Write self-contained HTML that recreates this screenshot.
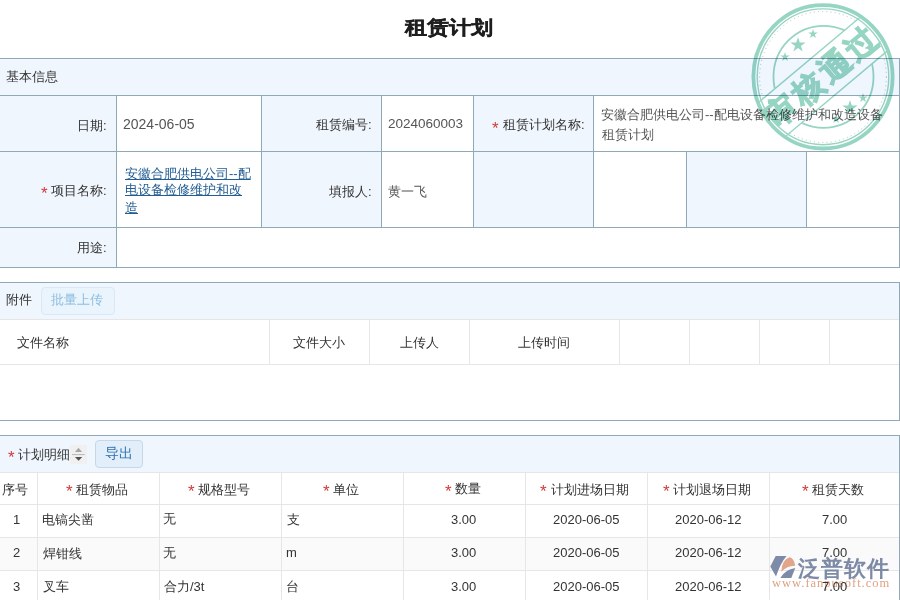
<!DOCTYPE html>
<html><head><meta charset="utf-8">
<style>
*{box-sizing:border-box;margin:0;padding:0}
html,body{width:900px;height:600px;overflow:hidden;background:#fff}
body{position:relative;font-family:"Liberation Sans",sans-serif;font-size:13px;color:#333}
.a{position:absolute}
.t{position:absolute;white-space:nowrap;line-height:16px}
.hl{position:absolute;height:1px;background:#8ea9b8}
.vl{position:absolute;width:1px;background:#8ea9b8}
.ghl{position:absolute;height:1px;background:#e6e6e6}
.gvl{position:absolute;width:1px;background:#e6e6e6}
.bg{position:absolute;background:#f0f6fd}
</style></head><body>
<!-- basic info section -->
<div class="bg" style="left:0;top:58px;width:899px;height:37px;background:#eff6fe"></div>
<div class="bg" style="left:0;top:96px;width:116px;height:171px"></div>
<div class="bg" style="left:262px;top:96px;width:120px;height:131px"></div>
<div class="bg" style="left:474px;top:96px;width:119px;height:131px"></div>
<div class="bg" style="left:687px;top:152px;width:119px;height:75px"></div>
<div class="hl" style="left:0;top:58px;width:900px"></div>
<div class="hl" style="left:0;top:95px;width:900px"></div>
<div class="hl" style="left:0;top:151px;width:900px"></div>
<div class="hl" style="left:0;top:227px;width:900px"></div>
<div class="hl" style="left:0;top:267px;width:900px"></div>
<div class="vl" style="left:899px;top:58px;height:210px"></div>
<div class="vl" style="left:116px;top:95px;height:172px"></div>
<div class="vl" style="left:261px;top:95px;height:132px"></div>
<div class="vl" style="left:381px;top:95px;height:132px"></div>
<div class="vl" style="left:473px;top:95px;height:132px"></div>
<div class="vl" style="left:593px;top:95px;height:132px"></div>
<div class="vl" style="left:686px;top:151px;height:76px"></div>
<div class="vl" style="left:806px;top:151px;height:76px"></div>
<!-- attachment section -->
<div class="bg" style="left:0;top:282px;width:899px;height:37px;background:#eff6fe"></div>
<div class="hl" style="left:0;top:282px;width:900px"></div>
<div class="vl" style="left:899px;top:282px;height:139px"></div>
<div class="hl" style="left:0;top:420px;width:900px"></div>
<div class="ghl" style="left:0;top:319px;width:899px"></div>
<div class="ghl" style="left:0;top:364px;width:899px"></div>
<div class="gvl" style="left:269px;top:319px;height:45px"></div>
<div class="gvl" style="left:369px;top:319px;height:45px"></div>
<div class="gvl" style="left:469px;top:319px;height:45px"></div>
<div class="gvl" style="left:619px;top:319px;height:45px"></div>
<div class="gvl" style="left:689px;top:319px;height:45px"></div>
<div class="gvl" style="left:759px;top:319px;height:45px"></div>
<div class="gvl" style="left:829px;top:319px;height:45px"></div>
<div class="a" style="left:41px;top:287px;width:74px;height:28px;border:1px solid #d9e8f4;background:#e9f4fc;border-radius:4px"></div>
<!-- detail section -->
<div class="bg" style="left:0;top:435px;width:899px;height:37px;background:#eff6fe"></div>
<div class="hl" style="left:0;top:435px;width:900px"></div>
<div class="vl" style="left:899px;top:435px;height:165px"></div>
<div class="ghl" style="left:0;top:472px;width:899px"></div>
<div class="ghl" style="left:0;top:504px;width:899px"></div>
<div class="ghl" style="left:0;top:537px;width:899px"></div>
<div class="ghl" style="left:0;top:570px;width:899px"></div>
<div class="a" style="left:0;top:538px;width:899px;height:32px;background:#fafafa"></div>
<div class="gvl" style="left:37px;top:472px;height:128px"></div>
<div class="gvl" style="left:159px;top:472px;height:128px"></div>
<div class="gvl" style="left:281px;top:472px;height:128px"></div>
<div class="gvl" style="left:403px;top:472px;height:128px"></div>
<div class="gvl" style="left:525px;top:472px;height:128px"></div>
<div class="gvl" style="left:647px;top:472px;height:128px"></div>
<div class="gvl" style="left:769px;top:472px;height:128px"></div>
<div class="a" style="left:70px;top:445px;width:17px;height:19px;background:#f0f0f0"></div>
<svg class="a" style="left:70px;top:445px" width="17" height="19" viewBox="0 0 17 19">
<path d="M5,7 L8.5,2.8 L12,7 Z" fill="#a6a6a6"/><rect x="2" y="9" width="12.75" height="1.1" fill="#bdbdbd"/><path d="M5,12 L12.2,12 L8.6,15.8 Z" fill="#505050"/></svg>
<div class="a" style="left:95px;top:440px;width:48px;height:28px;border:1px solid #c6d8e8;background:#e2effb;border-radius:4px"></div>
<svg class="a" style="left:0;top:0" width="900" height="600" viewBox="0 0 900 600">
<path d="M775.7,556 L786.5,556 Q780.5,563 776,576.5 L770.3,566.5 Z" fill="#7e8ba8"/>
<path d="M781.3,571.7 Q781.5,560 789.5,557.2 Q794,558 795.3,565.7 Q787,565.5 781.3,571.7 Z" fill="#e0a58a"/>
<path d="M780.3,578 Q785,569.5 795.3,568 L791.3,578 Z" fill="#7e8ba8"/>
<text x="797.5" y="575.5" font-size="22" font-weight="bold" fill="#7d8aa5" font-family="Liberation Sans, sans-serif" letter-spacing="1">泛普软件</text>
<text x="772" y="587.3" font-size="12.5" fill="#e0a285" font-family="Liberation Serif, serif" letter-spacing="1">www.fanpusoft.com</text>
</svg>

<div class="t" id="title" style="left:405.00px;top:21.00px;font-size:22px;font-weight:bold;color:#1e1e1e;-webkit-text-stroke:0.45px #1e1e1e;transform:scaleY(0.86);transform-origin:0 0">租赁计划</div>
<div class="t" id="jbxx" style="left:6.00px;top:69.00px;">基本信息</div>
<div class="t" id="riqi" style="left:77.00px;top:118.00px;">日期:</div>
<div class="t" id="date" style="left:123.00px;top:116.00px;font-size:14px;color:#555">2024-06-05</div>
<div class="t" id="zlbh" style="left:316.00px;top:117.00px;">租赁编号:</div>
<div class="t" id="num" style="left:388.00px;top:116.00px;font-size:13.5px;color:#555">2024060003</div>
<div class="t" id="s1" style="left:492.00px;top:121.00px;color:#d03a3a;font-size:17px">*</div>
<div class="t" id="zljhmc" style="left:503.00px;top:117.00px;">租赁计划名称:</div>
<div class="t" id="long1" style="left:601.00px;top:107.00px;color:#555">安徽合肥供电公司--配电设备检修维护和改造设备</div>
<div class="t" id="long2" style="left:602.00px;top:127.00px;color:#555">租赁计划</div>
<div class="t" id="s2" style="left:41.00px;top:186.20px;color:#d03a3a;font-size:17px">*</div>
<div class="t" id="xmmc" style="left:51.00px;top:183.00px;">项目名称:</div>
<div class="t" id="link1" style="left:125.00px;top:165.50px;color:#235d92;text-decoration:underline">安徽合肥供电公司--配</div>
<div class="t" id="link2" style="left:125.00px;top:182.20px;color:#235d92;text-decoration:underline">电设备检修维护和改</div>
<div class="t" id="link3" style="left:125.00px;top:199.70px;color:#235d92;text-decoration:underline">造</div>
<div class="t" id="yongtu" style="left:77.00px;top:240.00px;">用途:</div>
<div class="t" id="tbr" style="left:329.00px;top:184.00px;">填报人:</div>
<div class="t" id="hyf" style="left:388.00px;top:184.00px;color:#555">黄一飞</div>
<div class="t" id="fujian" style="left:6.00px;top:292.00px;">附件</div>
<div class="t" id="plsc" style="left:50.80px;top:292.00px;color:#8ebde0">批量上传</div>
<div class="t" id="wjmc" style="left:17.00px;top:335.00px;">文件名称</div>
<div class="t" id="wjdx" style="left:293.00px;top:335.00px;">文件大小</div>
<div class="t" id="scr" style="left:400.00px;top:335.00px;">上传人</div>
<div class="t" id="scsj" style="left:518.00px;top:335.00px;">上传时间</div>
<div class="t" id="s3" style="left:8.00px;top:450.20px;color:#d03a3a;font-size:17px">*</div>
<div class="t" id="jhmx" style="left:18.00px;top:447.00px;">计划明细</div>
<div class="t" id="daochu" style="left:105.00px;top:446.40px;color:#2c70ad;font-size:13.5px">导出</div>
<div class="t" id="xuhao" style="left:2.00px;top:482.00px;">序号</div>
<div class="t" id="s4" style="left:66.00px;top:483.80px;color:#d03a3a;font-size:17px">*</div>
<div class="t" id="zlwp" style="left:76.00px;top:482.00px;">租赁物品</div>
<div class="t" id="s5" style="left:188.00px;top:483.80px;color:#d03a3a;font-size:17px">*</div>
<div class="t" id="ggxh" style="left:198.00px;top:482.00px;">规格型号</div>
<div class="t" id="s6" style="left:323.00px;top:483.80px;color:#d03a3a;font-size:17px">*</div>
<div class="t" id="danwei" style="left:333.00px;top:482.00px;">单位</div>
<div class="t" id="s7" style="left:445.00px;top:483.80px;color:#d03a3a;font-size:17px">*</div>
<div class="t" id="shuliang" style="left:455.00px;top:481.00px;">数量</div>
<div class="t" id="s8" style="left:540.00px;top:483.80px;color:#d03a3a;font-size:17px">*</div>
<div class="t" id="jcrq" style="left:551.00px;top:482.00px;">计划进场日期</div>
<div class="t" id="s9" style="left:663.00px;top:483.80px;color:#d03a3a;font-size:17px">*</div>
<div class="t" id="tcrq" style="left:673.00px;top:482.00px;">计划退场日期</div>
<div class="t" id="s10" style="left:802.00px;top:483.80px;color:#d03a3a;font-size:17px">*</div>
<div class="t" id="zlts" style="left:812.00px;top:482.00px;">租赁天数</div>
<div class="t" id="r0c0" style="left:13.00px;top:512.00px;">1</div>
<div class="t" id="r0c1" style="left:42.00px;top:512.00px;">电镐尖凿</div>
<div class="t" id="r0c2" style="left:163.00px;top:511.00px;">无</div>
<div class="t" id="r0c3" style="left:287.00px;top:512.00px;">支</div>
<div class="t" id="r0c4" style="left:451.00px;top:512.00px;">3.00</div>
<div class="t" id="r0c5" style="left:553.00px;top:512.00px;">2020-06-05</div>
<div class="t" id="r0c6" style="left:675.00px;top:512.00px;">2020-06-12</div>
<div class="t" id="r0c7" style="left:822.00px;top:512.00px;">7.00</div>
<div class="t" id="r1c0" style="left:13.00px;top:545.00px;">2</div>
<div class="t" id="r1c1" style="left:43.00px;top:546.00px;">焊钳线</div>
<div class="t" id="r1c2" style="left:163.00px;top:545.00px;">无</div>
<div class="t" id="r1c3" style="left:286.00px;top:545.00px;">m</div>
<div class="t" id="r1c4" style="left:451.00px;top:545.00px;">3.00</div>
<div class="t" id="r1c5" style="left:553.00px;top:545.00px;">2020-06-05</div>
<div class="t" id="r1c6" style="left:675.00px;top:545.00px;">2020-06-12</div>
<div class="t" id="r1c7" style="left:822.00px;top:545.00px;">7.00</div>
<div class="t" id="r2c0" style="left:13.00px;top:579.00px;">3</div>
<div class="t" id="r2c1" style="left:43.00px;top:579.00px;">叉车</div>
<div class="t" id="r2c2" style="left:164.00px;top:579.00px;">合力/3t</div>
<div class="t" id="r2c3" style="left:286.00px;top:579.00px;">台</div>
<div class="t" id="r2c4" style="left:451.00px;top:579.00px;">3.00</div>
<div class="t" id="r2c5" style="left:553.00px;top:579.00px;">2020-06-05</div>
<div class="t" id="r2c6" style="left:675.00px;top:579.00px;">2020-06-12</div>
<div class="t" id="r2c7" style="left:822.00px;top:579.00px;">7.00</div>
<svg class="a" style="left:0;top:0;mix-blend-mode:multiply" width="900" height="600" viewBox="0 0 900 600">
<defs>
<mask id="bm"><rect x="0" y="0" width="900" height="600" fill="#fff"/>
<rect x="-80" y="-21.8" width="160" height="43.3" fill="#000" transform="translate(823 76.8) rotate(-40)"/></mask>
<path id="st" d="M0,-1 L0.2245,-0.309 L0.951,-0.309 L0.363,0.118 L0.588,0.809 L0,0.382 L-0.588,0.809 L-0.363,0.118 L-0.951,-0.309 L-0.2245,-0.309 Z"/>
</defs>
<g fill="none" stroke="#97d5c3">
<ellipse cx="823" cy="76.8" rx="69.6" ry="71.7" stroke-width="3.8"/>
<ellipse cx="823" cy="76.8" rx="65.8" ry="67.9" stroke-width="1.4"/>
<g mask="url(#bm)">
<ellipse cx="823" cy="77" rx="63.4" ry="65.5" stroke="#9aa8a6" stroke-width="1" stroke-dasharray="1 3.2" stroke-opacity="0.7"/>
<ellipse cx="823.5" cy="76.8" rx="50" ry="51" stroke-width="1.8"/>
</g>
<g transform="translate(823 76.8) rotate(-40)">
<line x1="-66" y1="-21.8" x2="66" y2="-21.8" stroke-width="1.4"/>
<line x1="-66" y1="21.5" x2="66" y2="21.5" stroke-width="1.4"/>
</g>
</g>
<g fill="#97d5c3">
<use href="#st" transform="translate(785 57) scale(5)"/>
<use href="#st" transform="translate(798 45) scale(8)"/>
<use href="#st" transform="translate(813 34) scale(5)"/>
<use href="#st" transform="translate(836 119) scale(5)"/>
<use href="#st" transform="translate(850 108) scale(8)"/>
<use href="#st" transform="translate(863 98) scale(5)"/>
<text x="823" y="86" transform="rotate(-40 824 76)" text-anchor="middle" font-size="31" font-weight="bold" letter-spacing="3.8" font-family="Liberation Sans, sans-serif" stroke="#97d5c3" stroke-width="1.2">审核通过</text>
</g>
</svg>

</body></html>
